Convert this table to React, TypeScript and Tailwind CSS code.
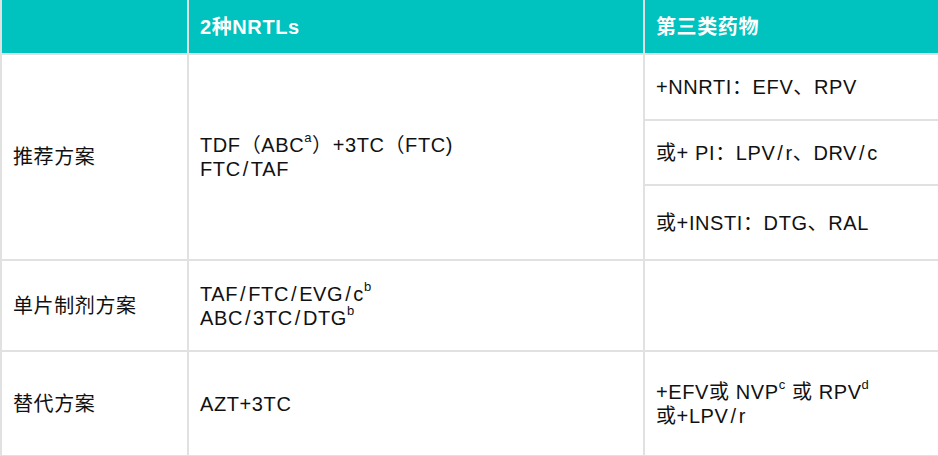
import React from 'react';

const font = { fontFamily: '"Liberation Sans", "Noto Sans CJK SC", sans-serif' };

const Sup: React.FC<{ children: React.ReactNode }> = ({ children }) => (
  <sup className="text-[13px] relative -top-[2px] align-super leading-none font-normal">{children}</sup>
);

// the reference font gives the slash more room
const S = () => <span className="mx-[2px]">/</span>;

const cell = 'border-2 border-[#e1e1e1] pl-[11px] pr-3 align-middle';

export default function App() {
  return (
    <div className="w-[938px] h-[456px] bg-white overflow-hidden" style={font}>
      <table className="w-[938px] table-fixed border-collapse text-[20px] leading-[24px] text-[#111] tracking-[0.6px]">
        <colgroup>
          <col className="w-[187px]" />
          <col className="w-[456px]" />
          <col className="w-[295px]" />
        </colgroup>
        <thead>
          <tr className="h-[54px] bg-[#00c2be] text-white">
            <th className={`${cell} border-t-0 text-left`}></th>
            <th className={`${cell} border-t-0 text-left font-bold`}>2种NRTLs</th>
            <th className={`${cell} border-t-0 text-left font-bold`}>第三类药物</th>
          </tr>
        </thead>
        <tbody>
          <tr className="h-[66px]">
            <td rowSpan={3} className={cell}>推荐方案</td>
            <td rowSpan={3} className={cell}>
              <div>
                TDF（ABC<Sup>a</Sup>）+3TC（FTC)
              </div>
              <div>
                FTC<S />TAF
              </div>
            </td>
            <td className={cell}>+NNRTI：EFV、RPV</td>
          </tr>
          <tr className="h-[65px]">
            <td className={cell}>
              或+ PI：LPV<S />r、DRV<S />c
            </td>
          </tr>
          <tr className="h-[75px]">
            <td className={cell}>或+INSTI：DTG、RAL</td>
          </tr>
          <tr className="h-[91px]">
            <td className={cell}>单片制剂方案</td>
            <td className={cell}>
              <div>
                TAF<S />FTC<S />EVG<S />c<Sup>b</Sup>
              </div>
              <div>
                ABC<S />3TC<S />DTG<Sup>b</Sup>
              </div>
            </td>
            <td className={cell}></td>
          </tr>
          <tr className="h-[105px]">
            <td className={cell}>替代方案</td>
            <td className={cell}>AZT+3TC</td>
            <td className={cell}>
              <div>
                +EFV或 NVP<Sup>c</Sup> 或 RPV<Sup>d</Sup>
              </div>
              <div>
                或+LPV<S />r
              </div>
            </td>
          </tr>
        </tbody>
      </table>
    </div>
  );
}
